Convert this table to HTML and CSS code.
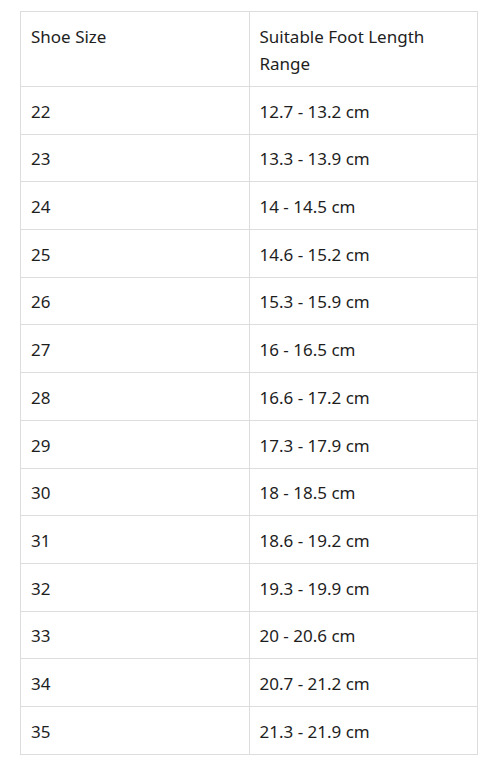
FILE: index.html
```html
<!DOCTYPE html>
<html>
<head>
<meta charset="utf-8">
<link rel="stylesheet" href="styles.css">
</head>
<body>
<table class="size-table">
  <tr><td class="col">Shoe Size</td><td class="col">Suitable Foot Length Range</td></tr>
  <tr><td>22</td><td>12.7 - 13.2 cm</td></tr>
  <tr><td>23</td><td>13.3 - 13.9 cm</td></tr>
  <tr><td>24</td><td>14 - 14.5 cm</td></tr>
  <tr><td>25</td><td>14.6 - 15.2 cm</td></tr>
  <tr><td>26</td><td>15.3 - 15.9 cm</td></tr>
  <tr><td>27</td><td>16 - 16.5 cm</td></tr>
  <tr><td>28</td><td>16.6 - 17.2 cm</td></tr>
  <tr><td>29</td><td>17.3 - 17.9 cm</td></tr>
  <tr><td>30</td><td>18 - 18.5 cm</td></tr>
  <tr><td>31</td><td>18.6 - 19.2 cm</td></tr>
  <tr><td>32</td><td>19.3 - 19.9 cm</td></tr>
  <tr><td>33</td><td>20 - 20.6 cm</td></tr>
  <tr><td>34</td><td>20.7 - 21.2 cm</td></tr>
  <tr><td>35</td><td>21.3 - 21.9 cm</td></tr>
</table>
</body>
</html>
```
FILE: styles.css
```css
html, body {
  margin: 0;
  padding: 0;
  background: #fff;
}
body {
  padding: 11px 20px;
  font-family: "Noto Sans", "Open Sans", sans-serif;
  font-size: 17px;
  color: #1e1e1e;
}
.size-table {
  border-collapse: collapse;
  width: 458px;
  table-layout: fixed;
}
.size-table td {
  border: 1px solid #dddddd;
  padding: 10.75px 10px 8.75px;
  line-height: 27.2px;
  vertical-align: top;
  width: 50%;
}
```
